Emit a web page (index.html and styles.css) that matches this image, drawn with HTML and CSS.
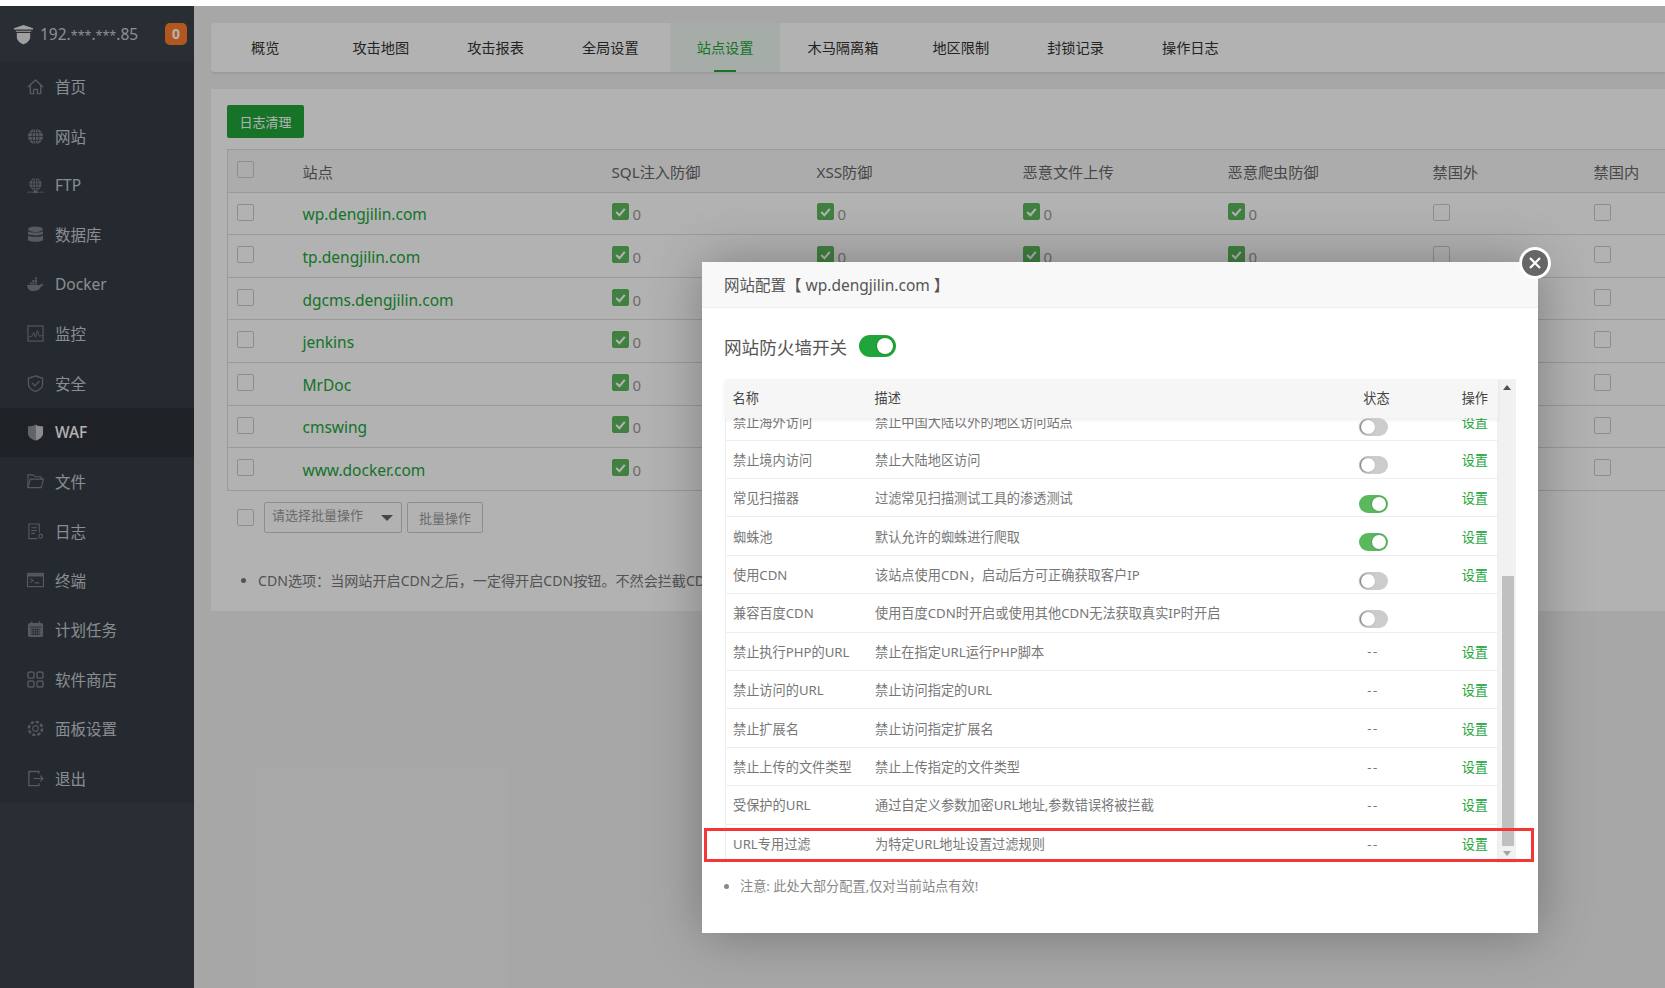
FILE: index.html
```html
<!DOCTYPE html>
<html lang="zh-CN">
<head>
  <meta charset="UTF-8" />
  <title>WAF - 站点设置</title>
  <link rel="stylesheet" href="styles.css">
</head>
<body>
  <div class="top-strip"></div>
  <div class="app">
    <aside class="sidebar">
      <div class="side-head">
        <svg class="logo" viewBox="0 0 22 22"><path fill="currentColor" d="M11 1l10 3.500v1.200H1V4.500zM3 7h16v1.200H3zM4 9.500h14V14c0 3.500-3.500 6-7 7.500-3.500-1.500-7-4-7-7.500z"/></svg>
        <span class="ip">192.<span class="mask">***</span>.<span class="mask">***</span>.85</span>
        <span class="badge">0</span>
      </div>
      <nav class="menu">
        <a class="menu-item"><svg viewBox="0 0 18 18" fill="none" stroke="currentColor" stroke-width="1.500"><path d="M1 9.500L9 2l8 7.500M3.500 8v8.500h3.500v-4.500h4v4.500h3.500V8"/></svg>首页</a>
        <a class="menu-item"><svg viewBox="0 0 18 18"><circle cx="9" cy="9" r="8" fill="currentColor"/><g fill="none" stroke="#363d45" stroke-width=".8"><ellipse cx="9" cy="9" rx="3.500" ry="8"/><path d="M9 1v16M1 9h16M2 5h14M2 13h14"/></g></svg>网站</a>
        <a class="menu-item"><svg viewBox="0 0 18 18"><circle cx="9" cy="7.500" r="6.500" fill="currentColor"/><g fill="none" stroke="#363d45" stroke-width=".8"><ellipse cx="9" cy="7.500" rx="3" ry="6.500"/><path d="M9 1v13M2.500 7.500h13M3.500 4h11M3.500 11h11"/></g><path fill="currentColor" d="M0 15.500h18v1H0zM7 14h4v3H7z"/></svg>FTP</a>
        <a class="menu-item"><svg viewBox="0 0 18 18" fill="currentColor"><ellipse cx="9" cy="3.500" rx="8" ry="3"/><path d="M1 5.500c1.500 2 14.500 2 16 0v3c-1.500 2-14.500 2-16 0zM1 10c1.500 2 14.500 2 16 0v4.500c-1 3-15 3-16 0z"/></svg>数据库</a>
        <a class="menu-item"><svg viewBox="0 0 18 18" fill="currentColor"><path d="M0 9.500h14c.5-1 1-2 1.500-1.500.8.300.8 1 1 1.300l1 .200c-.5 1-1.500 1.300-2.500 1.300C14 14 11 16 7 16 3 16 .5 14 0 9.500z"/><path d="M3 7h2v2H3zM5.700 7h2v2h-2zM8.400 7h2v2h-2zM5.700 4.300h2v2h-2zM8.400 4.300h2v2h-2zM8.400 1.700h2v2h-2z"/></svg>Docker</a>
        <a class="menu-item"><svg viewBox="0 0 18 18" fill="none" stroke="currentColor" stroke-width="1.200"><rect x="1" y="1" width="16" height="16"/><path d="M1 13l4-1 2-4 2 5 2-7 2 6 4-1" stroke-width="1"/></svg>监控</a>
        <a class="menu-item"><svg viewBox="0 0 18 18" fill="none" stroke="currentColor" stroke-width="1.300"><path d="M9 1l7.500 2.500V10c0 3.500-4 6-7.500 7.500C5.500 16 1.500 13.500 1.500 10V3.500z"/><path d="M5.500 8.500L8.500 11.500l4.500-5"/></svg>安全</a>
        <a class="menu-item active"><svg viewBox="0 0 18 18"><path fill="#8a8f95" d="M9 0.500C7 2 4 2.500 1 2.500V10c0 3.500 4 6.500 8 7.500z"/><path fill="#c4c8cc" d="M9 0.500c2 1.500 5 2 8 2V10c0 3.500-4 6.500-8 7.500z"/></svg>WAF</a>
        <a class="menu-item"><svg viewBox="0 0 18 18" fill="none" stroke="currentColor" stroke-width="1.200"><path d="M1 15.500V2h5.500l2 2H15v2.500"/><path d="M3.500 6.500H17.500L15 15.500H1z"/></svg>文件</a>
        <a class="menu-item"><svg viewBox="0 0 18 18" fill="none" stroke="currentColor" stroke-width="1.200"><path d="M11 16.500H2V1h11v9M4.500 5h6M4.500 8h6M4.500 11h4"/><circle cx="14.500" cy="14" r="2"/></svg>日志</a>
        <a class="menu-item"><svg viewBox="0 0 18 18" fill="none" stroke="currentColor" stroke-width="1.200"><rect x=".6" y="1.500" width="16.800" height="14"/><path d="M.6 3.500h16.800" stroke-width="2.500"/><path d="M3.500 7l3 2-3 2M8 11.500h5"/></svg>终端</a>
        <a class="menu-item"><svg viewBox="0 0 18 18"><rect x="1" y="2" width="16" height="15" rx="2" fill="currentColor"/><path d="M5 0.500v3M13 0.500v3" stroke="currentColor" stroke-width="1.500"/><path d="M2.500 6.500h13M4 9h10M4 11.500h10M4 14h10M6.500 8v7M9 8v7M11.500 8v7" stroke="#363d45" stroke-width=".9" fill="none"/></svg>计划任务</a>
        <a class="menu-item"><svg viewBox="0 0 18 18" fill="none" stroke="currentColor" stroke-width="1.500"><rect x="1" y="1" width="6.500" height="6.500" rx="2"/><rect x="10.500" y="1" width="6.500" height="6.500" rx="2"/><rect x="1" y="10.500" width="6.500" height="6.500" rx="2"/><rect x="10.500" y="10.500" width="6.500" height="6.500" rx="2"/></svg>软件商店</a>
        <a class="menu-item"><svg viewBox="0 0 18 18" fill="none" stroke="currentColor"><circle cx="9" cy="9" r="7" stroke-width="2.600" stroke-dasharray="3.500 2"/><circle cx="9" cy="9" r="3" stroke-width="1.200"/></svg>面板设置</a>
        <a class="menu-item"><svg viewBox="0 0 18 18" fill="none" stroke="currentColor" stroke-width="1.500"><path d="M12.500 4V1.500H2v15h10.500V14"/><path d="M7 9h10M14 6l3 3-3 3" stroke-width="1.200"/></svg>退出</a>
      </nav>
    </aside>

    <main class="main">
      <div class="tabs">
        <a class="tab tab-first">概览</a>
        <a class="tab">攻击地图</a>
        <a class="tab">攻击报表</a>
        <a class="tab">全局设置</a>
        <a class="tab active">站点设置</a>
        <a class="tab tab-long">木马隔离箱</a>
        <a class="tab">地区限制</a>
        <a class="tab">封锁记录</a>
        <a class="tab">操作日志</a>
      </div>

      <section class="panel">
        <button class="btn-green">日志清理</button>
        <table class="sites">
          <colgroup>
            <col class="c-check"><col class="c-site"><col class="c-a"><col class="c-b"><col class="c-a"><col class="c-a"><col class="c-c"><col class="c-d">
          </colgroup>
          <thead>
            <tr>
              <th><span class="check"></span></th>
              <th>站点</th><th>SQL注入防御</th><th>XSS防御</th><th>恶意文件上传</th><th>恶意爬虫防御</th><th>禁国外</th><th>禁国内</th>
            </tr>
          </thead>
          <tbody id="site-rows"></tbody>
        </table>
        <div class="batch">
          <span class="check"></span>
          <div class="select">请选择批量操作<i class="caret"></i></div>
          <button class="btn-plain">批量操作</button>
        </div>
        <ul class="tips">
          <li>CDN选项：当网站开启CDN之后，一定得开启CDN按钮。不然会拦截CDN节点的IP</li>
        </ul>
      </section>
    </main>
  </div>

  <div class="overlay">
    <div class="modal">
      <span class="close"><svg viewBox="0 0 14 14"><path d="M2 2l10 10M12 2L2 12" stroke="#fff" stroke-width="2.200" fill="none"/></svg></span>
      <div class="modal-title">网站配置【 wp.dengjilin.com 】</div>
      <div class="fw-row">网站防火墙开关 <span class="switch big on"></span></div>
      <div class="cfg">
        <div class="cfg-table">
          <div class="cfg-head">
            <span>名称</span><span>描述</span><span class="h-status">状态</span><span class="h-op">操作</span>
          </div>
          <div class="cfg-rows" id="cfg-rows"></div>
        </div>
        <div class="scrollbar">
          <i class="arrow up"></i>
          <div class="track"><div class="thumb"></div></div>
          <i class="arrow down"></i>
        </div>
      </div>
      <ul class="note"><li>注意: 此处大部分配置,仅对当前站点有效!</li></ul>
      <div class="red-box"></div>
    </div>
  </div>

  <script>
    let sites = ["wp.dengjilin.com", "tp.dengjilin.com", "dgcms.dengjilin.com", "jenkins", "MrDoc", "cmswing", "www.docker.com"];
    let tickCell = `<td><span class="count"><span class="check on"><svg viewBox="0 0 14 14"><path d="M3 7.500l3 3 5-6" stroke="#fff" stroke-width="2" fill="none"/></svg></span>0</span></td>`;

    document.getElementById('site-rows').innerHTML = sites.map(s => `
      <tr>
        <td><span class="check"></span></td>
        <td><a class="site-link">${s}</a></td>
        ${tickCell.repeat(4)}
        <td><span class="check"></span></td>
        <td><span class="check"></span></td>
      </tr>`).join('');

    // name, description, state (on/off/text), has settings link
    let rules = [
      ["禁止海外访问", "禁止中国大陆以外的地区访问站点", "off", true],
      ["禁止境内访问", "禁止大陆地区访问", "off", true],
      ["常见扫描器", "过滤常见扫描测试工具的渗透测试", "on", true],
      ["蜘蛛池", "默认允许的蜘蛛进行爬取", "on", true],
      ["使用CDN", "该站点使用CDN，启动后方可正确获取客户IP", "off", true],
      ["兼容百度CDN", "使用百度CDN时开启或使用其他CDN无法获取真实IP时开启", "off", false],
      ["禁止执行PHP的URL", "禁止在指定URL运行PHP脚本", "--", true],
      ["禁止访问的URL", "禁止访问指定的URL", "--", true],
      ["禁止扩展名", "禁止访问指定扩展名", "--", true],
      ["禁止上传的文件类型", "禁止上传指定的文件类型", "--", true],
      ["受保护的URL", "通过自定义参数加密URL地址,参数错误将被拦截", "--", true],
      ["URL专用过滤", "为特定URL地址设置过滤规则", "--", true]
    ];

    document.getElementById('cfg-rows').innerHTML = rules.map(r => {
      let state = r[2] === "--" ? "--" : `<span class="switch ${r[2]}"></span>`;
      return `<div class="cfg-row">
        <span>${r[0]}</span><span>${r[1]}</span>
        <span class="r-status">${state}</span>
        <span class="r-op">${r[3] ? '<a>设置</a>' : ''}</span>
      </div>`;
    }).join('');
  </script>
</body>
</html>
```

FILE: styles.css
```css
* {
  box-sizing: border-box;
}
body {
  margin: 0;
  height: 988px;
  overflow: hidden;
  font-family: "Noto Sans", "Noto Sans CJK SC", sans-serif;
  background: #fff;
  color: #555;
}
.top-strip {
  height: 6px;
  background: #fff;
}
.app {
  display: flex;
  height: 982px;
}

/* sidebar */
.sidebar {
  width: 194px;
  flex-shrink: 0;
  background: #3c424d;
}
.side-head {
  height: 56px;
  display: flex;
  align-items: center;
  padding: 0 7px 0 13px;
  color: #e6e6e6;
}
.logo {
  width: 21px;
  height: 21px;
  margin-right: 6px;
}
.ip {
  flex: 1;
  font-size: 15.500px;
  color: #c9ccd1;
  white-space: nowrap;
}
.mask {
  font-size: 12.500px;
}
.badge {
  width: 22px;
  height: 22px;
  line-height: 22px;
  text-align: center;
  border-radius: 5px;
  background: #ff7f2c;
  color: #fff;
  font-size: 14px;
  font-weight: bold;
}
.menu {
  background: #363d45;
}
.menu-item {
  height: 49.400px;
  display: flex;
  align-items: center;
  gap: 11px;
  padding-left: 27px;
  font-size: 15.500px;
  color: #c5cad0;
}
.menu-item svg {
  width: 17px;
  height: 17px;
  color: #7b8086;
  flex-shrink: 0;
}
.menu-item.active {
  background: #2c3138;
  color: #fff;
  font-weight: 500;
}

/* main */
.main {
  flex: 1;
  min-width: 0;
  overflow: hidden;
  background: #f0f0f0;
  padding: 17px 0 0 17px;
}
.tabs {
  height: 49px;
  display: flex;
  gap: 4px;
  background: #fff;
  border-radius: 4px 0 0 4px;
  box-shadow: 0 2px 2px rgba(0,0,0,0.08);
  margin-bottom: 17px;
}
.tab {
  position: relative;
  padding: 0 27px;
  font-size: 14.200px;
  line-height: 49px;
  color: #333;
  white-space: nowrap;
}
.tab-first {
  padding: 0 42px 0 40px;
}
.tab-long {
  padding: 0 23px;
}
.tab.active {
  background: #eef7f0;
  color: #20a53a;
}
.tab.active::after {
  content: "";
  position: absolute;
  left: 44px;
  bottom: 0;
  width: 22px;
  height: 2px;
  background: #20a53a;
}
.panel {
  height: 522px;
  background: #fff;
  padding: 16px 0 0 16px;
}
.btn-green {
  display: block;
  width: 77px;
  height: 33px;
  border: none;
  border-radius: 2px;
  background: #20a53a;
  color: #fff;
  font: inherit;
  font-size: 13px;
  margin-bottom: 11px;
}

/* site table */
.sites {
  table-layout: fixed;
  width: 1477px;
  border-collapse: collapse;
  border: 1px solid #ddd;
}
.c-check { width: 66px; }
.c-site { width: 309px; }
.c-a { width: 205px; }
.c-b { width: 206px; }
.c-c { width: 161px; }
.c-d { width: 120px; }
.sites th,
.sites td {
  height: 42.600px;
  padding: 0 0 0 9px;
  border-bottom: 1px solid #ddd;
  text-align: left;
  font-size: 15.200px;
  font-weight: normal;
  vertical-align: middle;
}
.sites th {
  background: #f6f6f6;
  color: #666;
  padding-top: 1px;
}
.sites td {
  color: #999;
  padding-top: 2px;
}
.check {
  display: inline-block;
  width: 17px;
  height: 17px;
  border: 1px solid #ccc;
  border-radius: 2px;
  vertical-align: middle;
  position: relative;
  top: -4px;
}
.check.on {
  background: #5cb85c;
  border-color: #5cb85c;
  top: 0;
}
.check svg {
  display: block;
  width: 15px;
  height: 15px;
}
.count {
  display: flex;
  align-items: center;
  gap: 4px;
  font-size: 15px;
}
.count .check {
  margin-top: -5px;
}
.site-link {
  color: #20a53a;
  font-size: 15.500px;
}
.batch {
  display: flex;
  align-items: center;
  margin-top: 11px;
  padding-left: 10px;
  height: 31px;
}
.batch .check {
  top: 0;
  margin-right: 10px;
}
.select {
  position: relative;
  width: 138px;
  height: 31px;
  line-height: 25px;
  border: 1px solid #ccc;
  border-radius: 2px;
  padding-left: 7px;
  font-size: 13px;
  color: #999;
}
.caret {
  position: absolute;
  right: 8px;
  top: 12px;
  border: 6px solid transparent;
  border-top: 6px solid #666;
  border-bottom: none;
}
.btn-plain {
  width: 76px;
  height: 31px;
  margin-left: 5px;
  border: 1px solid #ccc;
  border-radius: 2px;
  background: none;
  color: #999;
  font: inherit;
  font-size: 13px;
}
.tips {
  margin: 37px 0 0;
  padding-left: 31px;
  font-size: 14.100px;
  color: #777;
  white-space: nowrap;
}

/* dim layer and dialog */
.overlay {
  position: absolute;
  top: 6px;
  left: 0;
  right: 0;
  bottom: 0;
  background: rgba(0,0,0,0.3);
}
.modal {
  position: absolute;
  left: 702px;
  top: 256px;
  width: 836px;
  height: 671px;
  background: #fff;
  box-shadow: 1px 1px 50px rgba(0,0,0,0.3);
}
.close {
  position: absolute;
  right: -13px;
  top: -15px;
  width: 32px;
  height: 32px;
  border: 3px solid #fff;
  border-radius: 50%;
  background: #666;
  display: flex;
  align-items: center;
  justify-content: center;
}
.close svg {
  width: 14px;
  height: 14px;
}
.modal-title {
  height: 46px;
  line-height: 47px;
  padding-left: 22px;
  background: #f8f8f8;
  border-bottom: 1px solid #eee;
  font-size: 15.500px;
  color: #555;
}
.fw-row {
  display: flex;
  align-items: center;
  gap: 6px;
  height: 24px;
  margin: 26px 0 0 22px;
  font-size: 17.600px;
  color: #555;
}
.cfg {
  display: flex;
  width: 791px;
  height: 484px;
  margin: 21px 0 0 23px;
}
.cfg-table {
  width: 773px;
  border-left: 1px solid #eee;
  border-right: 1px solid #eee;
  display: flex;
  flex-direction: column;
}
.cfg-head,
.cfg-row {
  display: grid;
  grid-template-columns: 142px 468px 60px 1fr;
  align-items: center;
  font-size: 13.200px;
}
.cfg-head {
  height: 39px;
  flex-shrink: 0;
  background: #f6f6f6;
  color: #444;
  box-shadow: 0 2px 4px rgba(0,0,0,0.07);
  position: relative;
  padding-left: 7.500px;
  margin-left: -1px;
  margin-right: -1px;
}
.cfg-head span {
  position: relative;
  top: -1px;
}
.h-status {
  text-align: center;
  padding-left: 8px;
}
.h-op {
  text-align: right;
  padding-right: 10px;
}
.cfg-rows {
  flex: 1;
  overflow: hidden;
  display: flex;
  flex-direction: column;
  justify-content: flex-end;
}
.cfg-row {
  flex-shrink: 0;
  height: 38.400px;
  padding-left: 7px;
  color: #777;
  border-bottom: 1px solid #eee;
}
.cfg-row:last-child {
  border-bottom: none;
}
.r-status {
  text-align: center;
  color: #777;
  letter-spacing: 1.500px;
}
.r-op {
  text-align: right;
  padding-right: 9px;
}
.r-op a {
  color: #20a53a;
}
.switch {
  display: inline-block;
  position: relative;
  width: 29px;
  height: 18px;
  border-radius: 9px;
  background: #ccc;
  margin-top: 12px;
  vertical-align: top;
}
.switch::after {
  content: "";
  position: absolute;
  top: 2px;
  left: 2px;
  width: 14px;
  height: 14px;
  border-radius: 50%;
  background: #fff;
  box-shadow: -1px 0 2px rgba(0,0,0,0.5);
}
.switch.on {
  background: #5cb85c;
}
.switch.on::after {
  left: 13px;
  box-shadow: 0 0 2px rgba(0,0,0,0.3);
}
.switch.big {
  width: 37px;
  height: 22px;
  border-radius: 11px;
  background: #20a53a;
  margin: 0 0 0 6px;
}
.switch.big::after {
  top: 3px;
  left: 18px;
  width: 16px;
  height: 16px;
}
.scrollbar {
  flex: 1;
  background: #f1f1f1;
  display: flex;
  flex-direction: column;
  align-items: center;
}
.arrow {
  flex-shrink: 0;
  width: 0;
  border-left: 4px solid transparent;
  border-right: 4px solid transparent;
}
.arrow.up {
  height: 0;
  margin: 6px 0 11px;
  border-bottom: 5px solid #505050;
}
.arrow.down {
  height: 0;
  margin: 5px 0 7px;
  border-top: 5px solid #a3a3a3;
}
.track {
  flex: 1;
  width: 100%;
  display: flex;
  flex-direction: column;
  justify-content: flex-end;
}
.thumb {
  height: 270px;
  margin: 0 2px 0 4px;
  background: #c0c0c0;
}
.note {
  margin: 13px 0 0;
  padding-left: 38px;
  font-size: 13.200px;
  color: #888;
}
.red-box {
  position: absolute;
  left: 2px;
  top: 566px;
  width: 830px;
  height: 34px;
  border: 3px solid #f33636;
}
```
